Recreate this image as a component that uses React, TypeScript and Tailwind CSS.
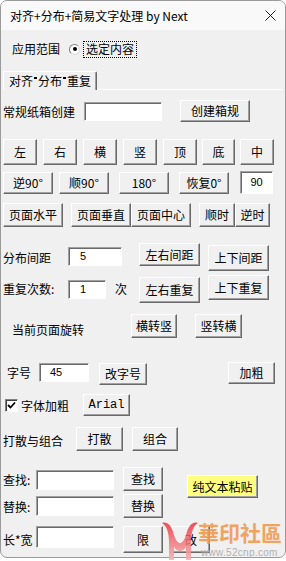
import React from "react";

const btn =
  "flex items-center justify-center shrink-0 bg-[#f0f0f0] border border-t-white border-l-white border-r-[#696969] border-b-[#696969] shadow-[inset_-1px_-1px_0_#a0a0a0] text-[12px] leading-none text-black whitespace-nowrap";
const field =
  "flex items-center shrink-0 bg-white border border-t-[#a0a0a0] border-l-[#a0a0a0] border-r-white border-b-white shadow-[inset_1px_1px_0_#696969] text-[11px] leading-none text-black font-['Liberation_Sans',sans-serif]";
const label = "shrink-0 h-[16px] leading-[16px] text-[12px] text-black whitespace-nowrap";

function Btn({ className, children }: { className: string; children: React.ReactNode }) {
  return <div className={`${btn} ${className}`}>{children}</div>;
}

function Field({ className, children }: { className: string; children?: React.ReactNode }) {
  return <div className={`${field} ${className}`}>{children}</div>;
}

function Dot() {
  return <span className="inline-block w-[3px] h-[2px] bg-black -translate-y-[3px] mx-[1px]" />;
}

function Watermark() {
  return (
    <div className="absolute left-[160px] top-[519px] w-[124px] h-[42px] pointer-events-none">
      <svg className="absolute left-0 top-0" width="40" height="42" viewBox="0 0 40 42">
        <defs>
          <linearGradient id="wm" x1="0" y1="0" x2="0" y2="1">
            <stop offset="0" stopColor="#e8343c" />
            <stop offset="1" stopColor="#f7b0b0" />
          </linearGradient>
        </defs>
        <path
          d="M2 4 C8 2 12 8 14 16 C16 22 18 24 20 24 C22 24 24 22 26 16 C28 8 32 2 38 4 C33 7 31 14 31 24 L31 41 L26 41 L26 28 C24 31 22 32 20 32 C18 32 16 31 14 28 L14 41 L9 41 L9 24 C9 14 7 7 2 4 Z"
          fill="url(#wm)"
          opacity="0.85"
        />
      </svg>
      <div className="absolute left-[38px] top-[2px] text-[21px] leading-[23px] font-bold text-[#f39a50] font-['Noto_Sans_CJK_SC',sans-serif] opacity-90 whitespace-nowrap">
        華印社區
      </div>
      <div className="absolute left-[41px] top-[28px] text-[10px] leading-[11px] text-[#b0b0b0] tracking-[0.3px] font-['Liberation_Sans',sans-serif] whitespace-nowrap">
        www.52cnp.com
      </div>
    </div>
  );
}

export default function App() {
  return (
    <div className="relative w-[286px] h-[561px] bg-white overflow-hidden font-['Noto_Sans_CJK_SC',sans-serif] text-black">
      <div className="w-[286px] h-[558px] border border-[#9a9a9a] rounded-[7px] bg-[#f0f0f0] flex flex-col overflow-hidden">
        {/* title bar */}
        <div className="h-[29px] shrink-0 bg-[#f9f9f9] flex items-center justify-between pl-[9px] pr-[9px]">
          <span className="text-[12px] leading-none">对齐+分布+简易文字处理 by Next</span>
          <svg width="11" height="11" viewBox="0 0 11 11">
            <path d="M0.5 0.5 L10.5 10.5 M10.5 0.5 L0.5 10.5" stroke="#222" strokeWidth="1" />
          </svg>
        </div>

        {/* scope */}
        <div className="mt-[10px] h-[18px] flex items-center pl-[11px]">
          <span className={`${label} w-[57px]`}>应用范围</span>
          <div className="w-[11px] h-[11px] rounded-full border border-t-[#808080] border-l-[#808080] border-r-[#dcdcdc] border-b-[#dcdcdc] bg-white flex items-center justify-center">
            <div className="w-[4px] h-[4px] rounded-full bg-black" />
          </div>
          <div className="ml-[3px] w-[54px] h-[17px] border border-dotted border-black flex items-center justify-center text-[12px] leading-none">
            选定内容
          </div>
        </div>

        {/* tab strip */}
        <div className="mt-[13px] h-[19px] flex items-end pl-[2px] pr-[2px]">
          <div className="w-[94px] h-[19px] border-l border-t border-r border-l-white border-t-white border-r-[#696969] shadow-[inset_-1px_0_0_#a0a0a0] rounded-t-[2px] flex items-center justify-center text-[12px] leading-none whitespace-nowrap">
            对齐<Dot />分布<Dot />重复
          </div>
          <div className="flex-1 h-[1px] bg-white" />
        </div>

        {/* box spec */}
        <div className="mt-[10px] h-[22px] flex items-start pl-[2px]">
          <span className={`${label} w-[81px] mt-[4px]`}>常规纸箱创建</span>
          <Field className="w-[78px] h-[19px] mt-[2px]" />
          <Btn className="ml-[18px] w-[70px] h-[22px]">创建箱规</Btn>
        </div>

        {/* align buttons */}
        <div className="mt-[17px] h-[26px] flex items-start pl-[2px]">
          <Btn className="w-[34px] h-[26px]">左</Btn>
          <Btn className="ml-[6px] w-[34px] h-[26px]">右</Btn>
          <Btn className="ml-[6px] w-[34px] h-[26px]">横</Btn>
          <Btn className="ml-[6px] w-[34px] h-[26px]">竖</Btn>
          <Btn className="ml-[6px] w-[34px] h-[26px]">顶</Btn>
          <Btn className="ml-[5px] w-[33px] h-[26px]">底</Btn>
          <Btn className="ml-[5px] w-[34px] h-[26px]">中</Btn>
        </div>

        {/* rotation */}
        <div className="mt-[6px] h-[23px] flex items-start pl-[2px]">
          <Btn className="mt-[1px] w-[50px] h-[22px]">逆90°</Btn>
          <Btn className="mt-[1px] ml-[6px] w-[50px] h-[22px]">顺90°</Btn>
          <Btn className="mt-[1px] ml-[10px] w-[50px] h-[22px]">180°</Btn>
          <Btn className="mt-[1px] ml-[10px] w-[50px] h-[22px]">恢复0°</Btn>
          <Field className="ml-[11px] w-[33px] h-[23px] justify-center">90</Field>
        </div>

        {/* page */}
        <div className="mt-[9px] h-[24px] flex items-start pl-[2px]">
          <Btn className="w-[60px] h-[24px]">页面水平</Btn>
          <Btn className="ml-[8px] w-[60px] h-[24px]">页面垂直</Btn>
          <Btn className="w-[60px] h-[24px]">页面中心</Btn>
          <Btn className="ml-[8px] w-[36px] h-[24px]">顺时</Btn>
          <Btn className="w-[35px] h-[24px]">逆时</Btn>
        </div>

        {/* distribute spacing */}
        <div className="mt-[16px] h-[29px] flex items-start pl-[2px]">
          <span className={`${label} w-[65px] mt-[7px]`}>分布间距</span>
          <Field className="w-[54px] h-[19px] mt-[4px] pl-[11px]">5</Field>
          <Btn className="ml-[17px] w-[61px] h-[23px]">左右间距</Btn>
          <Btn className="ml-[8px] mt-[2px] w-[61px] h-[26px]">上下间距</Btn>
        </div>

        {/* repeat */}
        <div className="mt-[3px] h-[28px] flex items-start pl-[2px]">
          <span className={`${label} w-[65px] mt-[6px]`}>重复次数:</span>
          <Field className="w-[38px] h-[19px] mt-[5px] pl-[11px]">1</Field>
          <span className={`${label} ml-[9px] w-[12px] mt-[6px]`}>次</span>
          <Btn className="ml-[12px] mt-[2px] w-[61px] h-[26px]">左右重复</Btn>
          <Btn className="ml-[8px] w-[61px] h-[25px]">上下重复</Btn>
        </div>

        {/* current page rotate */}
        <div className="mt-[11px] h-[24px] flex items-start pl-[11px]">
          <span className={`${label} w-[119px] mt-[8px]`}>当前页面旋转</span>
          <Btn className="w-[46px] h-[24px]">横转竖</Btn>
          <Btn className="ml-[18px] w-[47px] h-[24px]">竖转横</Btn>
        </div>

        {/* font size */}
        <div className="mt-[24px] h-[24px] flex items-start pl-[6px]">
          <span className={`${label} w-[32px] mt-[3px]`}>字号</span>
          <Field className="w-[50px] h-[19px] mt-[1px] pl-[10px]">45</Field>
          <Btn className="ml-[10px] mt-[1px] w-[48px] h-[22px]">改字号</Btn>
          <Btn className="ml-[81px] w-[47px] h-[22px]">加粗</Btn>
        </div>

        {/* bold checkbox */}
        <div className="mt-[8px] h-[22px] flex items-start pl-[4px]">
          <div className="mt-[5px] w-[13px] h-[13px] bg-white border border-t-[#808080] border-l-[#808080] border-r-white border-b-white shadow-[inset_1px_1px_0_#404040] flex items-center justify-center">
            <svg width="9" height="9" viewBox="0 0 9 9">
              <path d="M1 4 L3.5 6.5 L8 1.5" stroke="#000" strokeWidth="1.8" fill="none" />
            </svg>
          </div>
          <span className={`${label} ml-[3px] w-[62px] mt-[4px]`}>字体加粗</span>
          <Btn className="w-[47px] h-[22px] font-['Liberation_Mono',monospace] text-[11px]">Arial</Btn>
        </div>

        {/* ungroup */}
        <div className="mt-[11px] h-[24px] flex items-start pl-[2px]">
          <span className={`${label} w-[73px] mt-[6px]`}>打散与组合</span>
          <Btn className="w-[47px] h-[24px]">打散</Btn>
          <Btn className="ml-[9px] w-[46px] h-[24px]">组合</Btn>
        </div>

        {/* find / replace */}
        <div className="mt-[16px] flex items-start pl-[2px]">
          <div className="flex flex-col">
            <div className="h-[24px] flex items-start">
              <span className={`${label} w-[33px] mt-[5px]`}>查找:</span>
              <Field className="w-[78px] h-[20px] mt-[3px]" />
              <Btn className="ml-[9px] w-[40px] h-[24px]">查找</Btn>
            </div>
            <div className="mt-[3px] h-[24px] flex items-start">
              <span className={`${label} w-[33px] mt-[5px]`}>替换:</span>
              <Field className="w-[78px] h-[20px] mt-[2px]" />
              <Btn className="ml-[9px] w-[40px] h-[24px]">替换</Btn>
            </div>
          </div>
          <Btn className="ml-[24px] mt-[8px] w-[71px] h-[23px] bg-[#ffff80]">纯文本粘贴</Btn>
        </div>

        {/* size limit */}
        <div className="mt-[8px] h-[27px] flex items-start pl-[2px]">
          <span className={`${label} w-[33px] mt-[6px]`}>长*宽</span>
          <Field className="w-[78px] h-[22px]" />
          <Btn className="ml-[9px] w-[40px] h-[27px]">限</Btn>
          <Btn className="ml-[9px] w-[38px] h-[27px]">改</Btn>
        </div>
      </div>
      <Watermark />
    </div>
  );
}
